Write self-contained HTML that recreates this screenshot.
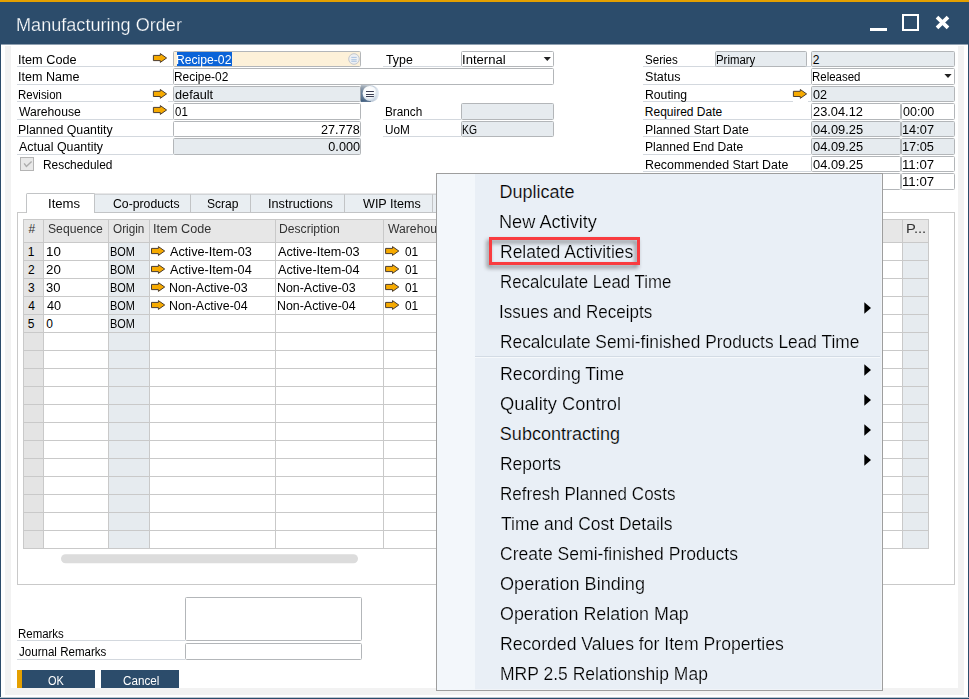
<!DOCTYPE html>
<html lang="en"><head><meta charset="utf-8"><title>Manufacturing Order</title>
<style>
html,body{margin:0;padding:0;}
body{width:969px;height:699px;overflow:hidden;background:#fff;font-family:"Liberation Sans",sans-serif;}
#win{position:relative;z-index:0;width:969px;height:699px;overflow:hidden;background:#fff;}
#win div,#win span,#win svg{position:absolute;box-sizing:border-box;}
.t{white-space:nowrap;}
.f{border:1px solid #b3b6b9;border-radius:1.5px;background:#fff;}
.fd{border:1px solid #b3b6b9;border-radius:1.5px;background:#e6ebef;}
.ul{background:#d3d8de;height:1px;}

</style></head>
<body>
<div id="win">
<div style="left:0px;top:0px;width:969px;height:2px;background:#e5a000;"></div>
<div style="left:0px;top:2px;width:969px;height:42px;background:#2c4c6b;"></div>
<div style="left:0px;top:44px;width:969px;height:1px;background:#8fa0b1;"></div>
<div style="left:0px;top:44px;width:1px;height:655px;background:#2c4c6b;"></div>
<div style="left:968px;top:44px;width:1px;height:655px;background:#2c4c6b;"></div>
<div style="left:0px;top:698px;width:969px;height:1px;background:#2c4c6b;"></div>
<div style="left:0px;top:697px;width:969px;height:1px;background:#bcc6d0;"></div>
<div style="left:5px;top:46px;width:6px;height:649px;background:#f2f2f2;"></div>
<div style="left:958px;top:46px;width:6px;height:649px;background:#f2f2f2;"></div>
<div style="left:5px;top:688px;width:959px;height:7px;background:#f2f2f2;"></div>
<span class="t" style="top:14.76px;font-size:18px;line-height:20px;color:#fff;left:15.83px;transform:scaleX(1.0050);transform-origin:0 50%;-webkit-text-stroke:0.25px #2c4c6b;">Manufacturing Order</span>
<div style="left:870px;top:28px;width:17px;height:3px;background:#fff;"></div>
<div style="left:902px;top:14px;width:17px;height:17px;border:2px solid #fff;"></div>
<svg style="left:934px;top:14px;width:17px;height:17px" viewBox="0 0 17 17"><path d="M3 3.1 L14 13.9 M14 3.1 L3 13.9" stroke="#fff" stroke-width="3.7" fill="none"/></svg>
<span class="t" style="top:52.84px;font-size:12px;line-height:14px;color:#000;left:18.32px;transform:scaleX(1.0582);transform-origin:0 50%;">Item Code</span>
<div style="left:17px;top:66px;width:156px;height:1px;background:#d3d8de;z-index:-1;"></div>
<span class="t" style="top:69.84px;font-size:12px;line-height:14px;color:#000;left:18.32px;transform:scaleX(1.0465);transform-origin:0 50%;">Item Name</span>
<div style="left:17px;top:84px;width:156px;height:1px;background:#d3d8de;z-index:-1;"></div>
<span class="t" style="top:87.84px;font-size:12px;line-height:14px;color:#000;left:18.40px;transform:scaleX(0.9536);transform-origin:0 50%;">Revision</span>
<div style="left:17px;top:101px;width:136px;height:1px;background:#d3d8de;z-index:-1;"></div>
<div style="left:168px;top:101px;width:5px;height:1px;background:#d3d8de;z-index:-1;"></div>
<span class="t" style="top:104.84px;font-size:12px;line-height:14px;color:#000;left:19.20px;transform:scaleX(1.0133);transform-origin:0 50%;">Warehouse</span>
<div style="left:17px;top:119px;width:156px;height:1px;background:#d3d8de;z-index:-1;"></div>
<span class="t" style="top:122.84px;font-size:12px;line-height:14px;color:#000;left:18.40px;transform:scaleX(1.0288);transform-origin:0 50%;">Planned Quantity</span>
<div style="left:17px;top:136px;width:156px;height:1px;background:#d3d8de;z-index:-1;"></div>
<span class="t" style="top:139.84px;font-size:12px;line-height:14px;color:#000;left:19.20px;transform:scaleX(1.0326);transform-origin:0 50%;">Actual Quantity</span>
<div style="left:17px;top:154px;width:156px;height:1px;background:#d3d8de;z-index:-1;"></div>
<svg style="left:152px;top:52px;width:16px;height:12px;" viewBox="-0.70 -0.80 16 12"><path d="M0.7 2.6 H7.6 V0.8 L13.9 5.2 L7.6 9.6 V7.8 H0.7 Z" fill="#f6aa00" stroke="#4a3c30" stroke-width="1" stroke-linejoin="miter"/></svg>
<svg style="left:152px;top:88px;width:16px;height:12px;" viewBox="-0.70 -0.70 16 12"><path d="M0.7 2.6 H7.6 V0.8 L13.9 5.2 L7.6 9.6 V7.8 H0.7 Z" fill="#f6aa00" stroke="#4a3c30" stroke-width="1" stroke-linejoin="miter"/></svg>
<svg style="left:152px;top:104px;width:16px;height:12px;" viewBox="-0.70 -0.80 16 12"><path d="M0.7 2.6 H7.6 V0.8 L13.9 5.2 L7.6 9.6 V7.8 H0.7 Z" fill="#f6aa00" stroke="#4a3c30" stroke-width="1" stroke-linejoin="miter"/></svg>
<div class="f" style="left:173px;top:51px;width:188px;height:16px;background:#fdf1d9;"></div>
<div style="left:177px;top:52px;width:55px;height:14px;background:#0a63d8;"></div>
<span class="t" style="top:52.84px;font-size:12px;line-height:14px;color:#fff;left:176.18px;transform:scaleX(1.0127);transform-origin:0 50%;">Recipe-02</span>
<svg style="left:348px;top:53px;width:13px;height:13px;" viewBox="0.00 0.00 13 13"><circle cx="6" cy="6" r="5.3" fill="#eef0f3" stroke="#c3c7cc" stroke-width="1"/><path d="M3.3 4.4H8.7M3.3 6.7H8.7M3.3 8.3H8.7" stroke="#9bb8dc" stroke-width="0.8"/></svg>
<div class="f" style="left:173px;top:68px;width:381px;height:17px;"></div>
<span class="t" style="top:69.84px;font-size:12px;line-height:14px;color:#000;left:174.40px;transform:scaleX(0.9919);transform-origin:0 50%;">Recipe-02</span>
<div class="fd" style="left:173px;top:86px;width:188px;height:16px;"></div>
<span class="t" style="top:87.84px;font-size:12px;line-height:14px;color:#000;left:175.20px;transform:scaleX(1.0590);transform-origin:0 50%;">default</span>
<svg style="left:360px;top:85px;width:20px;height:18px;" viewBox="-0.80 -0.30 20 18"><defs><linearGradient id="gb" x1="0" y1="0" x2="1" y2="0"><stop offset="0" stop-color="#5a7390"/><stop offset="0.45" stop-color="#9fb0c3"/><stop offset="1" stop-color="#e9eff6"/></linearGradient><linearGradient id="gv" x1="0" y1="0" x2="0" y2="1"><stop offset="0" stop-color="#b4bac0" stop-opacity="0.9"/><stop offset="0.5" stop-color="#7d8fa3" stop-opacity="0.2"/><stop offset="1" stop-color="#2f4f72" stop-opacity="0.85"/></linearGradient><radialGradient id="g1" cx="0.45" cy="0.35" r="0.65"><stop offset="0" stop-color="#ffffff"/><stop offset="0.6" stop-color="#f7f9fb"/><stop offset="1" stop-color="#c9d6e4"/></radialGradient></defs><path d="M0 0.3 H12 Q18.2 2 18.2 8.3 Q18.2 14.5 12 16.5 H0 Z" fill="url(#gb)"/><path d="M0 0.3 H10 V16.5 H0 Z" fill="url(#gv)"/><ellipse cx="9" cy="8.1" rx="7.2" ry="7.5" fill="url(#g1)"/><path d="M5.2 6.1H13.1M5.2 9.1H13.1M5.2 11.2H13.1" stroke="#3a3d52" stroke-width="1.05"/></svg>
<div class="f" style="left:173px;top:103px;width:188px;height:17px;"></div>
<span class="t" style="top:104.84px;font-size:12px;line-height:14px;color:#000;left:175.20px;transform:scaleX(0.9563);transform-origin:0 50%;">01</span>
<div class="f" style="left:173px;top:121px;width:188px;height:16px;"></div>
<span class="t" style="top:122.84px;font-size:12px;line-height:14px;color:#000;right:609.30px;transform:scaleX(1.0528);transform-origin:100% 50%;">27.778</span>
<div class="fd" style="left:173px;top:138px;width:188px;height:17px;"></div>
<span class="t" style="top:139.84px;font-size:12px;line-height:14px;color:#000;right:609.30px;transform:scaleX(1.0558);transform-origin:100% 50%;">0.000</span>
<div style="left:20px;top:157px;width:14px;height:14px;background:#e9e9e9;border:1px solid #b4b4b4;"></div>
<svg style="left:20px;top:157px;width:15px;height:15px;" viewBox="0.00 0.00 15 15"><path d="M4.1 6.4 L6.4 9.5 L11.6 4.4" stroke="#adadad" stroke-width="1.4" fill="none"/></svg>
<span class="t" style="top:157.84px;font-size:12px;line-height:14px;color:#000;left:42.60px;transform:scaleX(0.9918);transform-origin:0 50%;">Rescheduled</span>
<span class="t" style="top:52.84px;font-size:12px;line-height:14px;color:#000;left:386.40px;transform:scaleX(1.0288);transform-origin:0 50%;">Type</span>
<div style="left:383px;top:66px;width:78px;height:1px;background:#d3d8de;z-index:-1;"></div>
<span class="t" style="top:104.84px;font-size:12px;line-height:14px;color:#000;left:384.56px;transform:scaleX(0.9806);transform-origin:0 50%;">Branch</span>
<div style="left:383px;top:119px;width:78px;height:1px;background:#d3d8de;z-index:-1;"></div>
<span class="t" style="top:122.84px;font-size:12px;line-height:14px;color:#000;left:384.56px;transform:scaleX(0.9812);transform-origin:0 50%;">UoM</span>
<div style="left:383px;top:136px;width:78px;height:1px;background:#d3d8de;z-index:-1;"></div>
<div class="f" style="left:461px;top:51px;width:93px;height:16px;"></div>
<span class="t" style="top:52.84px;font-size:12px;line-height:14px;color:#000;left:462.30px;transform:scaleX(1.0884);transform-origin:0 50%;">Internal</span>
<svg style="left:543px;top:56px;width:9px;height:6px;" viewBox="-0.70 -0.90 9 6"><path d="M0 0 H7.2 L3.6 4.2 Z" fill="#222"/></svg>
<div class="fd" style="left:461px;top:103px;width:93px;height:17px;"></div>
<div class="fd" style="left:461px;top:121px;width:93px;height:16px;"></div>
<span class="t" style="top:122.84px;font-size:12px;line-height:14px;color:#000;left:462.40px;transform:scaleX(0.8616);transform-origin:0 50%;">KG</span>
<span class="t" style="top:52.84px;font-size:12px;line-height:14px;color:#000;left:644.56px;transform:scaleX(0.9650);transform-origin:0 50%;">Series</span>
<div style="left:643px;top:66px;width:168px;height:1px;background:#d3d8de;z-index:-1;"></div>
<span class="t" style="top:69.84px;font-size:12px;line-height:14px;color:#000;left:644.56px;transform:scaleX(1.0469);transform-origin:0 50%;">Status</span>
<div style="left:643px;top:84px;width:168px;height:1px;background:#d3d8de;z-index:-1;"></div>
<span class="t" style="top:87.84px;font-size:12px;line-height:14px;color:#000;left:644.56px;transform:scaleX(1.0182);transform-origin:0 50%;">Routing</span>
<div style="left:643px;top:101px;width:150px;height:1px;background:#d3d8de;z-index:-1;"></div>
<div style="left:808px;top:101px;width:3px;height:1px;background:#d3d8de;z-index:-1;"></div>
<span class="t" style="top:104.84px;font-size:12px;line-height:14px;color:#000;left:644.83px;">Required Date</span>
<div style="left:643px;top:119px;width:168px;height:1px;background:#d3d8de;z-index:-1;"></div>
<span class="t" style="top:122.84px;font-size:12px;line-height:14px;color:#000;left:644.56px;transform:scaleX(1.0239);transform-origin:0 50%;">Planned Start Date</span>
<div style="left:643px;top:136px;width:168px;height:1px;background:#d3d8de;z-index:-1;"></div>
<span class="t" style="top:139.84px;font-size:12px;line-height:14px;color:#000;left:644.56px;transform:scaleX(1.0072);transform-origin:0 50%;">Planned End Date</span>
<div style="left:643px;top:154px;width:168px;height:1px;background:#d3d8de;z-index:-1;"></div>
<span class="t" style="top:157.84px;font-size:12px;line-height:14px;color:#000;left:644.56px;transform:scaleX(1.0328);transform-origin:0 50%;">Recommended Start Date</span>
<div style="left:643px;top:171px;width:168px;height:1px;background:#d3d8de;z-index:-1;"></div>
<div class="fd" style="left:715px;top:51px;width:92px;height:16px;"></div>
<span class="t" style="top:52.84px;font-size:12px;line-height:14px;color:#000;left:716.40px;transform:scaleX(0.9504);transform-origin:0 50%;">Primary</span>
<div class="fd" style="left:811px;top:51px;width:144px;height:16px;"></div>
<span class="t" style="top:52.84px;font-size:12px;line-height:14px;color:#000;left:812.64px;">2</span>
<div class="f" style="left:811px;top:68px;width:144px;height:17px;"></div>
<span class="t" style="top:69.84px;font-size:12px;line-height:14px;color:#000;left:812.40px;transform:scaleX(0.9554);transform-origin:0 50%;">Released</span>
<svg style="left:944px;top:73px;width:9px;height:6px;" viewBox="-0.40 -0.90 9 6"><path d="M0 0 H7.2 L3.6 4.2 Z" fill="#222"/></svg>
<svg style="left:792px;top:88px;width:16px;height:12px;" viewBox="-0.70 -0.70 16 12"><path d="M0.7 2.6 H7.6 V0.8 L13.9 5.2 L7.6 9.6 V7.8 H0.7 Z" fill="#f6aa00" stroke="#4a3c30" stroke-width="1" stroke-linejoin="miter"/></svg>
<div class="fd" style="left:811px;top:86px;width:144px;height:16px;"></div>
<span class="t" style="top:87.84px;font-size:12px;line-height:14px;color:#000;left:813.20px;transform:scaleX(1.0504);transform-origin:0 50%;">02</span>
<div class="f" style="left:811px;top:103px;width:90px;height:17px;"></div>
<span class="t" style="top:104.84px;font-size:12px;line-height:14px;color:#000;left:813.20px;transform:scaleX(1.0691);transform-origin:0 50%;">23.04.12</span>
<div class="f" style="left:901px;top:103px;width:54px;height:17px;"></div>
<span class="t" style="top:104.84px;font-size:12px;line-height:14px;color:#000;left:903.20px;transform:scaleX(1.0435);transform-origin:0 50%;">00:00</span>
<div class="fd" style="left:811px;top:121px;width:90px;height:16px;"></div>
<span class="t" style="top:122.84px;font-size:12px;line-height:14px;color:#000;left:813.20px;transform:scaleX(1.0716);transform-origin:0 50%;">04.09.25</span>
<div class="fd" style="left:901px;top:121px;width:54px;height:16px;"></div>
<span class="t" style="top:122.84px;font-size:12px;line-height:14px;color:#000;left:902.40px;transform:scaleX(1.0658);transform-origin:0 50%;">14:07</span>
<div class="fd" style="left:811px;top:138px;width:90px;height:17px;"></div>
<span class="t" style="top:139.84px;font-size:12px;line-height:14px;color:#000;left:813.20px;transform:scaleX(1.0716);transform-origin:0 50%;">04.09.25</span>
<div class="fd" style="left:901px;top:138px;width:54px;height:17px;"></div>
<span class="t" style="top:139.84px;font-size:12px;line-height:14px;color:#000;left:902.40px;transform:scaleX(1.0647);transform-origin:0 50%;">17:05</span>
<div class="f" style="left:811px;top:156px;width:90px;height:16px;"></div>
<span class="t" style="top:157.84px;font-size:12px;line-height:14px;color:#000;left:813.20px;transform:scaleX(1.0716);transform-origin:0 50%;">04.09.25</span>
<div class="f" style="left:901px;top:156px;width:54px;height:16px;"></div>
<span class="t" style="top:157.84px;font-size:12px;line-height:14px;color:#000;left:902.40px;transform:scaleX(1.1018);transform-origin:0 50%;">11:07</span>
<div class="f" style="left:811px;top:173px;width:90px;height:17px;"></div>
<div class="f" style="left:901px;top:173px;width:54px;height:17px;"></div>
<span class="t" style="top:174.84px;font-size:12px;line-height:14px;color:#000;left:902.40px;transform:scaleX(1.1018);transform-origin:0 50%;">11:07</span>
<div style="left:643px;top:189px;width:168px;height:1px;background:#d3d8de;z-index:-1;"></div>
<div style="left:17px;top:212px;width:938px;height:373px;background:#fff;border:1px solid #c9c9c9;"></div>
<div style="left:94px;top:194px;width:343px;height:18px;background:#e9eef2;"></div>
<div style="left:94px;top:193px;width:343px;height:1px;transform:translate(0.00px,0.60px);background:#c2c4c6;"></div>
<div style="left:94px;top:212px;width:343px;height:1px;background:#c2c4c6;"></div>
<div style="left:26px;top:193px;width:69px;height:20px;background:#fff;border:1px solid #c2c4c6;border-bottom:none;border-radius:1.5px 1.5px 0 0;"></div>
<span class="t" style="top:196.84px;font-size:12px;line-height:14px;color:#000;left:48.10px;transform:scaleX(1.0955);transform-origin:0 50%;">Items</span>
<div style="left:190px;top:194px;width:1px;height:18px;transform:translate(0.00px,0.30px);background:#c2c4c6;"></div>
<span class="t" style="top:196.84px;font-size:12px;line-height:14px;color:#000;left:113.10px;transform:scaleX(1.0191);transform-origin:0 50%;">Co-products</span>
<div style="left:250px;top:194px;width:1px;height:18px;transform:translate(0.00px,0.30px);background:#c2c4c6;"></div>
<span class="t" style="top:196.84px;font-size:12px;line-height:14px;color:#000;left:207.00px;transform:scaleX(1.0059);transform-origin:0 50%;">Scrap</span>
<div style="left:344px;top:194px;width:1px;height:18px;transform:translate(0.00px,0.30px);background:#c2c4c6;"></div>
<span class="t" style="top:196.84px;font-size:12px;line-height:14px;color:#000;left:268.05px;transform:scaleX(1.0573);transform-origin:0 50%;">Instructions</span>
<div style="left:432px;top:194px;width:1px;height:18px;transform:translate(0.00px,0.30px);background:#c2c4c6;"></div>
<span class="t" style="top:196.84px;font-size:12px;line-height:14px;color:#000;left:362.89px;transform:scaleX(1.0486);transform-origin:0 50%;">WIP Items</span>
<div style="left:23px;top:219px;width:905px;height:23px;background:#e7e7e7;"></div>
<div style="left:23px;top:242px;width:20px;height:306px;background:#e4e4e4;"></div>
<div style="left:108px;top:242px;width:41px;height:306px;background:#e6ebef;"></div>
<div style="left:902px;top:242px;width:26px;height:306px;background:#e6ebef;"></div>
<div style="left:23px;top:219px;width:1px;height:330px;background:#c9c9c9;"></div>
<div style="left:43px;top:219px;width:1px;height:330px;background:#c9c9c9;"></div>
<div style="left:108px;top:219px;width:1px;height:330px;background:#c9c9c9;"></div>
<div style="left:149px;top:219px;width:1px;height:330px;background:#c9c9c9;"></div>
<div style="left:275px;top:219px;width:1px;height:330px;background:#c9c9c9;"></div>
<div style="left:383px;top:219px;width:1px;height:330px;background:#c9c9c9;"></div>
<div style="left:470px;top:219px;width:1px;height:330px;background:#c9c9c9;"></div>
<div style="left:560px;top:219px;width:1px;height:330px;background:#c9c9c9;"></div>
<div style="left:650px;top:219px;width:1px;height:330px;background:#c9c9c9;"></div>
<div style="left:740px;top:219px;width:1px;height:330px;background:#c9c9c9;"></div>
<div style="left:820px;top:219px;width:1px;height:330px;background:#c9c9c9;"></div>
<div style="left:902px;top:219px;width:1px;height:330px;background:#c9c9c9;"></div>
<div style="left:928px;top:219px;width:1px;height:330px;background:#c9c9c9;"></div>
<div style="left:23px;top:219px;width:906px;height:1px;background:#c9c9c9;"></div>
<div style="left:23px;top:242px;width:906px;height:1px;background:#c9c9c9;"></div>
<div style="left:23px;top:260px;width:906px;height:1px;background:#c9c9c9;"></div>
<div style="left:23px;top:278px;width:906px;height:1px;background:#c9c9c9;"></div>
<div style="left:23px;top:296px;width:906px;height:1px;background:#c9c9c9;"></div>
<div style="left:23px;top:314px;width:906px;height:1px;background:#c9c9c9;"></div>
<div style="left:23px;top:332px;width:906px;height:1px;background:#c9c9c9;"></div>
<div style="left:23px;top:350px;width:906px;height:1px;background:#c9c9c9;"></div>
<div style="left:23px;top:368px;width:906px;height:1px;background:#c9c9c9;"></div>
<div style="left:23px;top:386px;width:906px;height:1px;background:#c9c9c9;"></div>
<div style="left:23px;top:404px;width:906px;height:1px;background:#c9c9c9;"></div>
<div style="left:23px;top:422px;width:906px;height:1px;background:#c9c9c9;"></div>
<div style="left:23px;top:440px;width:906px;height:1px;background:#c9c9c9;"></div>
<div style="left:23px;top:458px;width:906px;height:1px;background:#c9c9c9;"></div>
<div style="left:23px;top:476px;width:906px;height:1px;background:#c9c9c9;"></div>
<div style="left:23px;top:494px;width:906px;height:1px;background:#c9c9c9;"></div>
<div style="left:23px;top:512px;width:906px;height:1px;background:#c9c9c9;"></div>
<div style="left:23px;top:530px;width:906px;height:1px;background:#c9c9c9;"></div>
<div style="left:23px;top:548px;width:906px;height:1px;background:#c9c9c9;"></div>
<span class="t" style="top:221.84px;font-size:12px;line-height:14px;color:#333;left:28.61px;">#</span>
<span class="t" style="top:221.84px;font-size:12px;line-height:14px;color:#333;left:47.56px;transform:scaleX(1.0141);transform-origin:0 50%;">Sequence</span>
<span class="t" style="top:221.84px;font-size:12px;line-height:14px;color:#333;left:113.10px;transform:scaleX(0.9782);transform-origin:0 50%;">Origin</span>
<span class="t" style="top:221.84px;font-size:12px;line-height:14px;color:#333;left:152.92px;transform:scaleX(1.0515);transform-origin:0 50%;">Item Code</span>
<span class="t" style="top:221.84px;font-size:12px;line-height:14px;color:#333;left:279.40px;transform:scaleX(1.0108);transform-origin:0 50%;">Description</span>
<span class="t" style="top:221.84px;font-size:12px;line-height:14px;color:#333;left:387.89px;transform:scaleX(1.0147);transform-origin:0 50%;">Warehouse</span>
<span class="t" style="top:221.84px;font-size:12px;line-height:14px;color:#333;left:906.04px;transform:scaleX(1.2272);transform-origin:0 50%;">P...</span>
<span class="t" style="top:244.84px;font-size:12px;line-height:14px;color:#000;left:27.68px;">1</span>
<span class="t" style="top:244.84px;font-size:12px;line-height:14px;color:#000;left:45.60px;transform:scaleX(1.1128);transform-origin:0 50%;">10</span>
<span class="t" style="top:244.84px;font-size:12px;line-height:14px;color:#000;left:110.00px;transform:scaleX(0.9091);transform-origin:0 50%;">BOM</span>
<svg style="left:150px;top:245px;width:16px;height:12px;" viewBox="-0.80 -0.80 16 12"><path d="M0.7 2.6 H7.6 V0.8 L13.9 5.2 L7.6 9.6 V7.8 H0.7 Z" fill="#f6aa00" stroke="#4a3c30" stroke-width="1" stroke-linejoin="miter"/></svg>
<span class="t" style="top:244.84px;font-size:12px;line-height:14px;color:#000;left:170.40px;transform:scaleX(1.0572);transform-origin:0 50%;">Active-Item-03</span>
<span class="t" style="top:244.84px;font-size:12px;line-height:14px;color:#000;left:277.86px;transform:scaleX(1.0556);transform-origin:0 50%;">Active-Item-03</span>
<svg style="left:384px;top:245px;width:16px;height:12px;" viewBox="-0.90 -0.80 16 12"><path d="M0.7 2.6 H7.6 V0.8 L13.9 5.2 L7.6 9.6 V7.8 H0.7 Z" fill="#f6aa00" stroke="#4a3c30" stroke-width="1" stroke-linejoin="miter"/></svg>
<span class="t" style="top:244.84px;font-size:12px;line-height:14px;color:#000;left:405.00px;transform:scaleX(0.9926);transform-origin:0 50%;">01</span>
<span class="t" style="top:262.84px;font-size:12px;line-height:14px;color:#000;left:28.00px;">2</span>
<span class="t" style="top:262.84px;font-size:12px;line-height:14px;color:#000;left:45.99px;transform:scaleX(1.1100);transform-origin:0 50%;">20</span>
<span class="t" style="top:262.84px;font-size:12px;line-height:14px;color:#000;left:110.00px;transform:scaleX(0.9091);transform-origin:0 50%;">BOM</span>
<svg style="left:150px;top:263px;width:16px;height:12px;" viewBox="-0.80 -0.80 16 12"><path d="M0.7 2.6 H7.6 V0.8 L13.9 5.2 L7.6 9.6 V7.8 H0.7 Z" fill="#f6aa00" stroke="#4a3c30" stroke-width="1" stroke-linejoin="miter"/></svg>
<span class="t" style="top:262.84px;font-size:12px;line-height:14px;color:#000;left:170.40px;transform:scaleX(1.0564);transform-origin:0 50%;">Active-Item-04</span>
<span class="t" style="top:262.84px;font-size:12px;line-height:14px;color:#000;left:277.86px;transform:scaleX(1.0524);transform-origin:0 50%;">Active-Item-04</span>
<svg style="left:384px;top:263px;width:16px;height:12px;" viewBox="-0.90 -0.80 16 12"><path d="M0.7 2.6 H7.6 V0.8 L13.9 5.2 L7.6 9.6 V7.8 H0.7 Z" fill="#f6aa00" stroke="#4a3c30" stroke-width="1" stroke-linejoin="miter"/></svg>
<span class="t" style="top:262.84px;font-size:12px;line-height:14px;color:#000;left:405.00px;transform:scaleX(0.9926);transform-origin:0 50%;">01</span>
<span class="t" style="top:280.84px;font-size:12px;line-height:14px;color:#000;left:27.89px;">3</span>
<span class="t" style="top:280.84px;font-size:12px;line-height:14px;color:#000;left:45.93px;transform:scaleX(1.0833);transform-origin:0 50%;">30</span>
<span class="t" style="top:280.84px;font-size:12px;line-height:14px;color:#000;left:110.00px;transform:scaleX(0.9091);transform-origin:0 50%;">BOM</span>
<svg style="left:150px;top:281px;width:16px;height:12px;" viewBox="-0.80 -0.80 16 12"><path d="M0.7 2.6 H7.6 V0.8 L13.9 5.2 L7.6 9.6 V7.8 H0.7 Z" fill="#f6aa00" stroke="#4a3c30" stroke-width="1" stroke-linejoin="miter"/></svg>
<span class="t" style="top:280.84px;font-size:12px;line-height:14px;color:#000;left:169.44px;transform:scaleX(1.0331);transform-origin:0 50%;">Non-Active-03</span>
<span class="t" style="top:280.84px;font-size:12px;line-height:14px;color:#000;left:277.00px;transform:scaleX(1.0331);transform-origin:0 50%;">Non-Active-03</span>
<svg style="left:384px;top:281px;width:16px;height:12px;" viewBox="-0.90 -0.80 16 12"><path d="M0.7 2.6 H7.6 V0.8 L13.9 5.2 L7.6 9.6 V7.8 H0.7 Z" fill="#f6aa00" stroke="#4a3c30" stroke-width="1" stroke-linejoin="miter"/></svg>
<span class="t" style="top:280.84px;font-size:12px;line-height:14px;color:#000;left:405.00px;transform:scaleX(0.9926);transform-origin:0 50%;">01</span>
<span class="t" style="top:298.84px;font-size:12px;line-height:14px;color:#000;left:28.20px;">4</span>
<span class="t" style="top:298.84px;font-size:12px;line-height:14px;color:#000;left:46.80px;transform:scaleX(1.0579);transform-origin:0 50%;">40</span>
<span class="t" style="top:298.84px;font-size:12px;line-height:14px;color:#000;left:110.00px;transform:scaleX(0.9091);transform-origin:0 50%;">BOM</span>
<svg style="left:150px;top:299px;width:16px;height:12px;" viewBox="-0.80 -0.80 16 12"><path d="M0.7 2.6 H7.6 V0.8 L13.9 5.2 L7.6 9.6 V7.8 H0.7 Z" fill="#f6aa00" stroke="#4a3c30" stroke-width="1" stroke-linejoin="miter"/></svg>
<span class="t" style="top:298.84px;font-size:12px;line-height:14px;color:#000;left:169.44px;transform:scaleX(1.0331);transform-origin:0 50%;">Non-Active-04</span>
<span class="t" style="top:298.84px;font-size:12px;line-height:14px;color:#000;left:277.00px;transform:scaleX(1.0331);transform-origin:0 50%;">Non-Active-04</span>
<svg style="left:384px;top:299px;width:16px;height:12px;" viewBox="-0.90 -0.80 16 12"><path d="M0.7 2.6 H7.6 V0.8 L13.9 5.2 L7.6 9.6 V7.8 H0.7 Z" fill="#f6aa00" stroke="#4a3c30" stroke-width="1" stroke-linejoin="miter"/></svg>
<span class="t" style="top:298.84px;font-size:12px;line-height:14px;color:#000;left:405.00px;transform:scaleX(0.9926);transform-origin:0 50%;">01</span>
<span class="t" style="top:316.84px;font-size:12px;line-height:14px;color:#000;left:27.86px;">5</span>
<span class="t" style="top:316.84px;font-size:12px;line-height:14px;color:#000;left:46.32px;">0</span>
<span class="t" style="top:316.84px;font-size:12px;line-height:14px;color:#000;left:110.00px;transform:scaleX(0.9091);transform-origin:0 50%;">BOM</span>
<div style="left:61px;top:554px;width:297px;height:9px;transform:translate(0.00px,0.30px);background:#dcdcdc;border-radius:4.5px;"></div>
<span class="t" style="top:626.84px;font-size:12px;line-height:14px;color:#000;left:18.18px;transform:scaleX(0.9537);transform-origin:0 50%;">Remarks</span>
<div style="left:17px;top:640px;width:168px;height:1px;background:#d3d8de;z-index:-1;"></div>
<div class="f" style="left:185px;top:597px;width:177px;height:44px;"></div>
<span class="t" style="top:644.84px;font-size:12px;line-height:14px;color:#000;left:19.30px;transform:scaleX(0.9635);transform-origin:0 50%;">Journal Remarks</span>
<div style="left:17px;top:659px;width:168px;height:1px;background:#d3d8de;z-index:-1;"></div>
<div class="f" style="left:185px;top:643px;width:177px;height:17px;"></div>
<div style="left:17px;top:670px;width:78px;height:18px;background:#2c4c6b;"></div>
<div style="left:17px;top:670px;width:5px;height:18px;background:#e5a000;"></div>
<span class="t" style="top:673.84px;font-size:12px;line-height:14px;color:#fff;left:47.73px;transform:scaleX(0.9131);transform-origin:0 50%;">OK</span>
<div style="left:101px;top:670px;width:78px;height:18px;background:#2c4c6b;"></div>
<span class="t" style="top:673.84px;font-size:12px;line-height:14px;color:#fff;left:123.30px;transform:scaleX(0.9723);transform-origin:0 50%;">Cancel</span>
<div style="left:436px;top:173px;width:447px;height:518px;background:#e9eff6;border:1px solid #9e9e9e;box-shadow:inset -1px -1px 0 #f1f4f8;"></div>
<div style="left:437px;top:174px;width:38px;height:516px;background:#f3f7fb;"></div>
<span class="t" style="top:182.06px;font-size:18px;line-height:20px;color:#000;left:499.51px;-webkit-text-stroke:0.2px #e9eff6;">Duplicate</span>
<span class="t" style="top:212.06px;font-size:18px;line-height:20px;color:#000;left:499.20px;transform:scaleX(1.0092);transform-origin:0 50%;-webkit-text-stroke:0.2px #e9eff6;">New Activity</span>
<span class="t" style="top:242.06px;font-size:18px;line-height:20px;color:#000;left:499.55px;transform:scaleX(0.9724);transform-origin:0 50%;-webkit-text-stroke:0.2px #e9eff6;">Related Activities</span>
<span class="t" style="top:272.06px;font-size:18px;line-height:20px;color:#000;left:499.60px;transform:scaleX(0.9360);transform-origin:0 50%;-webkit-text-stroke:0.2px #e9eff6;">Recalculate Lead Time</span>
<span class="t" style="top:302.06px;font-size:18px;line-height:20px;color:#000;left:499.43px;transform:scaleX(0.9454);transform-origin:0 50%;-webkit-text-stroke:0.2px #e9eff6;">Issues and Receipts</span>
<svg style="left:863.5px;top:302.3px;width:8px;height:12px" viewBox="0 0 8 12"><path d="M0.3 0.3 L7 6 L0.3 11.7 Z" fill="#000"/></svg>
<span class="t" style="top:332.06px;font-size:18px;line-height:20px;color:#000;left:499.56px;transform:scaleX(0.9628);transform-origin:0 50%;-webkit-text-stroke:0.2px #e9eff6;">Recalculate Semi-finished Products Lead Time</span>
<span class="t" style="top:364.06px;font-size:18px;line-height:20px;color:#000;left:499.53px;transform:scaleX(0.9844);transform-origin:0 50%;-webkit-text-stroke:0.2px #e9eff6;">Recording Time</span>
<svg style="left:863.5px;top:364.3px;width:8px;height:12px" viewBox="0 0 8 12"><path d="M0.3 0.3 L7 6 L0.3 11.7 Z" fill="#000"/></svg>
<span class="t" style="top:394.06px;font-size:18px;line-height:20px;color:#000;left:500.00px;transform:scaleX(1.0171);transform-origin:0 50%;-webkit-text-stroke:0.2px #e9eff6;">Quality Control</span>
<svg style="left:863.5px;top:394.3px;width:8px;height:12px" viewBox="0 0 8 12"><path d="M0.3 0.3 L7 6 L0.3 11.7 Z" fill="#000"/></svg>
<span class="t" style="top:424.06px;font-size:18px;line-height:20px;color:#000;left:499.86px;-webkit-text-stroke:0.2px #e9eff6;">Subcontracting</span>
<svg style="left:863.5px;top:424.3px;width:8px;height:12px" viewBox="0 0 8 12"><path d="M0.3 0.3 L7 6 L0.3 11.7 Z" fill="#000"/></svg>
<span class="t" style="top:454.06px;font-size:18px;line-height:20px;color:#000;left:499.56px;transform:scaleX(0.9693);transform-origin:0 50%;-webkit-text-stroke:0.2px #e9eff6;">Reports</span>
<svg style="left:863.5px;top:454.3px;width:8px;height:12px" viewBox="0 0 8 12"><path d="M0.3 0.3 L7 6 L0.3 11.7 Z" fill="#000"/></svg>
<span class="t" style="top:484.06px;font-size:18px;line-height:20px;color:#000;left:499.58px;transform:scaleX(0.9477);transform-origin:0 50%;-webkit-text-stroke:0.2px #e9eff6;">Refresh Planned Costs</span>
<span class="t" style="top:514.06px;font-size:18px;line-height:20px;color:#000;left:501.00px;transform:scaleX(0.9718);transform-origin:0 50%;-webkit-text-stroke:0.2px #e9eff6;">Time and Cost Details</span>
<span class="t" style="top:544.06px;font-size:18px;line-height:20px;color:#000;left:500.00px;transform:scaleX(0.9750);transform-origin:0 50%;-webkit-text-stroke:0.2px #e9eff6;">Create Semi-finished Products</span>
<span class="t" style="top:574.06px;font-size:18px;line-height:20px;color:#000;left:500.00px;transform:scaleX(1.0060);transform-origin:0 50%;-webkit-text-stroke:0.2px #e9eff6;">Operation Binding</span>
<span class="t" style="top:604.06px;font-size:18px;line-height:20px;color:#000;left:500.00px;transform:scaleX(0.9930);transform-origin:0 50%;-webkit-text-stroke:0.2px #e9eff6;">Operation Relation Map</span>
<span class="t" style="top:634.06px;font-size:18px;line-height:20px;color:#000;left:499.53px;transform:scaleX(0.9795);transform-origin:0 50%;-webkit-text-stroke:0.2px #e9eff6;">Recorded Values for Item Properties</span>
<span class="t" style="top:664.06px;font-size:18px;line-height:20px;color:#000;left:499.55px;transform:scaleX(0.9724);transform-origin:0 50%;-webkit-text-stroke:0.2px #e9eff6;">MRP 2.5 Relationship Map</span>
<div style="left:475px;top:356px;width:405px;height:1px;background:#d3dbe4;"></div>
<div style="left:475px;top:357px;width:405px;height:1px;background:#f6f9fc;"></div>
<div style="left:489px;top:237px;width:151px;height:28px;border:3px solid #f93c40;filter:drop-shadow(-1.5px 3px 2px rgba(0,0,0,0.45));"></div>
</div>
</body></html>
